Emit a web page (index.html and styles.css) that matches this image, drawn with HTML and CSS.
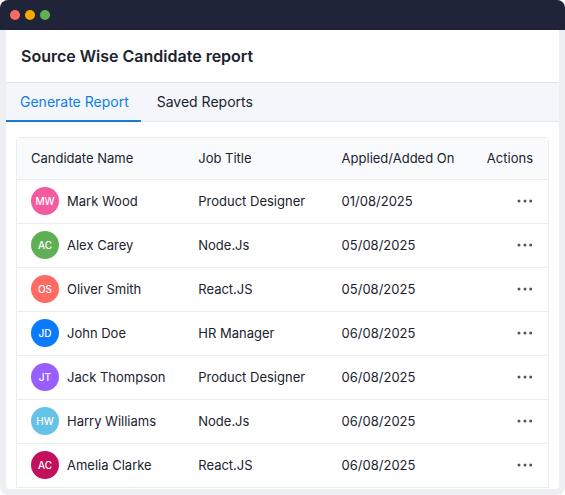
FILE: index.html
```
<!doctype html>
<html lang="en">
<head>
  <meta charset="utf-8">

  <meta name="viewport" content="width=device-width, initial-scale=1">

  <title>Source Wise Candidate report</title>

  <link rel="stylesheet" href="styles.css">

</head>
<body>

  <div class="window">
    <div class="window-bar">
      <span class="dot dot-red"></span>
      <span class="dot dot-orange"></span>
      <span class="dot dot-green"></span>
    </div>

    <main class="content">
      <h1>Source Wise Candidate report</h1>

      <nav class="tabs">
        <a href="#generate" class="tab is-active" aria-current="page">Generate Report</a>
        <a href="#saved" class="tab">Saved Reports</a>
      </nav>

      <div class="report">
        <table>
          <thead>
            <tr>
              <th class="col-name" scope="col">Candidate Name</th>
              <th class="col-job" scope="col">Job Title</th>
              <th class="col-date" scope="col">Applied/Added On</th>
              <th class="col-actions" scope="col">Actions</th>
            </tr>
          </thead>
          <tbody>
            <tr>
              <td><div class="person"><span class="avatar pink">MW</span>Mark Wood</div></td>
              <td>Product Designer</td>
              <td>01/08/2025</td>
              <td class="col-actions"><button type="button" class="more" aria-label="Actions for Mark Wood"><svg width="16" height="4" viewBox="0 0 16 4"><circle cx="2" cy="2" r="1.5"/><circle cx="8" cy="2" r="1.5"/><circle cx="13.7" cy="2" r="1.5"/></svg></button></td>
            </tr>
            <tr>
              <td><div class="person"><span class="avatar green">AC</span>Alex Carey</div></td>
              <td>Node.Js</td>
              <td>05/08/2025</td>
              <td class="col-actions"><button type="button" class="more" aria-label="Actions for Alex Carey"><svg width="16" height="4" viewBox="0 0 16 4"><circle cx="2" cy="2" r="1.5"/><circle cx="8" cy="2" r="1.5"/><circle cx="13.7" cy="2" r="1.5"/></svg></button></td>
            </tr>
            <tr>
              <td><div class="person"><span class="avatar coral">OS</span>Oliver Smith</div></td>
              <td>React.JS</td>
              <td>05/08/2025</td>
              <td class="col-actions"><button type="button" class="more" aria-label="Actions for Oliver Smith"><svg width="16" height="4" viewBox="0 0 16 4"><circle cx="2" cy="2" r="1.5"/><circle cx="8" cy="2" r="1.5"/><circle cx="13.7" cy="2" r="1.5"/></svg></button></td>
            </tr>
            <tr>
              <td><div class="person"><span class="avatar blue">JD</span>John Doe</div></td>
              <td>HR Manager</td>
              <td>06/08/2025</td>
              <td class="col-actions"><button type="button" class="more" aria-label="Actions for John Doe"><svg width="16" height="4" viewBox="0 0 16 4"><circle cx="2" cy="2" r="1.5"/><circle cx="8" cy="2" r="1.5"/><circle cx="13.7" cy="2" r="1.5"/></svg></button></td>
            </tr>
            <tr>
              <td><div class="person"><span class="avatar purple">JT</span>Jack Thompson</div></td>
              <td>Product Designer</td>
              <td>06/08/2025</td>
              <td class="col-actions"><button type="button" class="more" aria-label="Actions for Jack Thompson"><svg width="16" height="4" viewBox="0 0 16 4"><circle cx="2" cy="2" r="1.5"/><circle cx="8" cy="2" r="1.5"/><circle cx="13.7" cy="2" r="1.5"/></svg></button></td>
            </tr>
            <tr>
              <td><div class="person"><span class="avatar sky">HW</span>Harry Williams</div></td>
              <td>Node.Js</td>
              <td>06/08/2025</td>
              <td class="col-actions"><button type="button" class="more" aria-label="Actions for Harry Williams"><svg width="16" height="4" viewBox="0 0 16 4"><circle cx="2" cy="2" r="1.5"/><circle cx="8" cy="2" r="1.5"/><circle cx="13.7" cy="2" r="1.5"/></svg></button></td>
            </tr>
            <tr>
              <td><div class="person"><span class="avatar crimson">AC</span>Amelia Clarke</div></td>
              <td>React.JS</td>
              <td>06/08/2025</td>
              <td class="col-actions"><button type="button" class="more" aria-label="Actions for Amelia Clarke"><svg width="16" height="4" viewBox="0 0 16 4"><circle cx="2" cy="2" r="1.5"/><circle cx="8" cy="2" r="1.5"/><circle cx="13.7" cy="2" r="1.5"/></svg></button></td>
            </tr>
          </tbody>
        </table>
      </div>
    </main>
  </div>

</body>
</html>
```
FILE: styles.css
```
* {
  box-sizing: border-box;
}

body {
  margin: 0;
  background: white;
  color: #20222e;
  font: 13px/20px Inter, "Liberation Sans", sans-serif;
}

.window {
  padding: 0 6px 6px;
  border-radius: 8px;
  background: #eeeff2;
  overflow: hidden;
}

.window-bar {
  display: flex;
  align-items: center;
  gap: 5px;
  height: 30px;
  margin: 0 -6px;
  padding: 0 10px;
  background: #1f2438;
}

.dot {
  width: 10px;
  height: 10px;
  border-radius: 50%;
}

.dot-red { background: #ff6b62; }
.dot-orange { background: #ffa800; }
.dot-green { background: #5fb054; }

.content {
  border-radius: 0 0 4px 4px;
  background: white;
}

h1 {
  margin: 0;
  padding: 16px 15px;
  font-size: 16px;
  line-height: 20px;
  font-weight: 600;
}

/* tabs */

.tabs {
  display: flex;
  border: solid #e3e6ed;
  border-width: 1px 0;
  background: #f4f6fb;
}

.tab {
  margin-bottom: -1px;
  padding: 9px 12px 9px 14px;
  border-bottom: 2px solid transparent;
  color: #20222e;
  font-size: 14px;
  line-height: 19px;
  text-decoration: none;
}

.tab + .tab {
  padding-left: 16px;
}

.tab.is-active {
  border-color: #1a7bd3;
  color: #0c7ee8;
}

/* candidates table */

.report {
  margin: 0 10px;
  padding: 15px 0 1px;
}

table {
  width: 100%;
  border: 1px solid #e9edf0;
  border-radius: 4px 4px 0 0;
  border-spacing: 0;
  table-layout: fixed;
}

th,
td {
  height: 44px;
  padding: 0 0 2px 14px;
  border-bottom: 1px solid #e9edf0;
  font-weight: 400;
  text-align: left;
}

th {
  height: 42px;
  background: #f8fafc;
}

tr:last-child td {
  height: 43px;
  border-bottom: 0;
}

.col-name { width: 31.5%; }
.col-job { width: 27%; }
.col-date { width: 27%; }

.col-actions {
  padding: 0 15px 2px 0;
  text-align: right;
}

.person {
  display: flex;
  align-items: center;
  gap: 8px;
}

.avatar {
  width: 28px;
  border-radius: 50%;
  color: white;
  font-size: 10px;
  font-weight: 500;
  line-height: 28px;
  text-align: center;
}

.pink { background: #f25c9e; }
.green { background: #5fb054; }
.coral { background: #ff6b62; }
.blue { background: #0a7aff; }
.purple { background: #985eff; }
.sky { background: #64c2e8; }
.crimson { background: #c2105c; }

.more {
  display: block;
  margin-left: auto;
  padding: 8px 0;
  border: 0;
  background: none;
  cursor: pointer;
}

.more svg {
  display: block;
  fill: #55565c;
}
```
